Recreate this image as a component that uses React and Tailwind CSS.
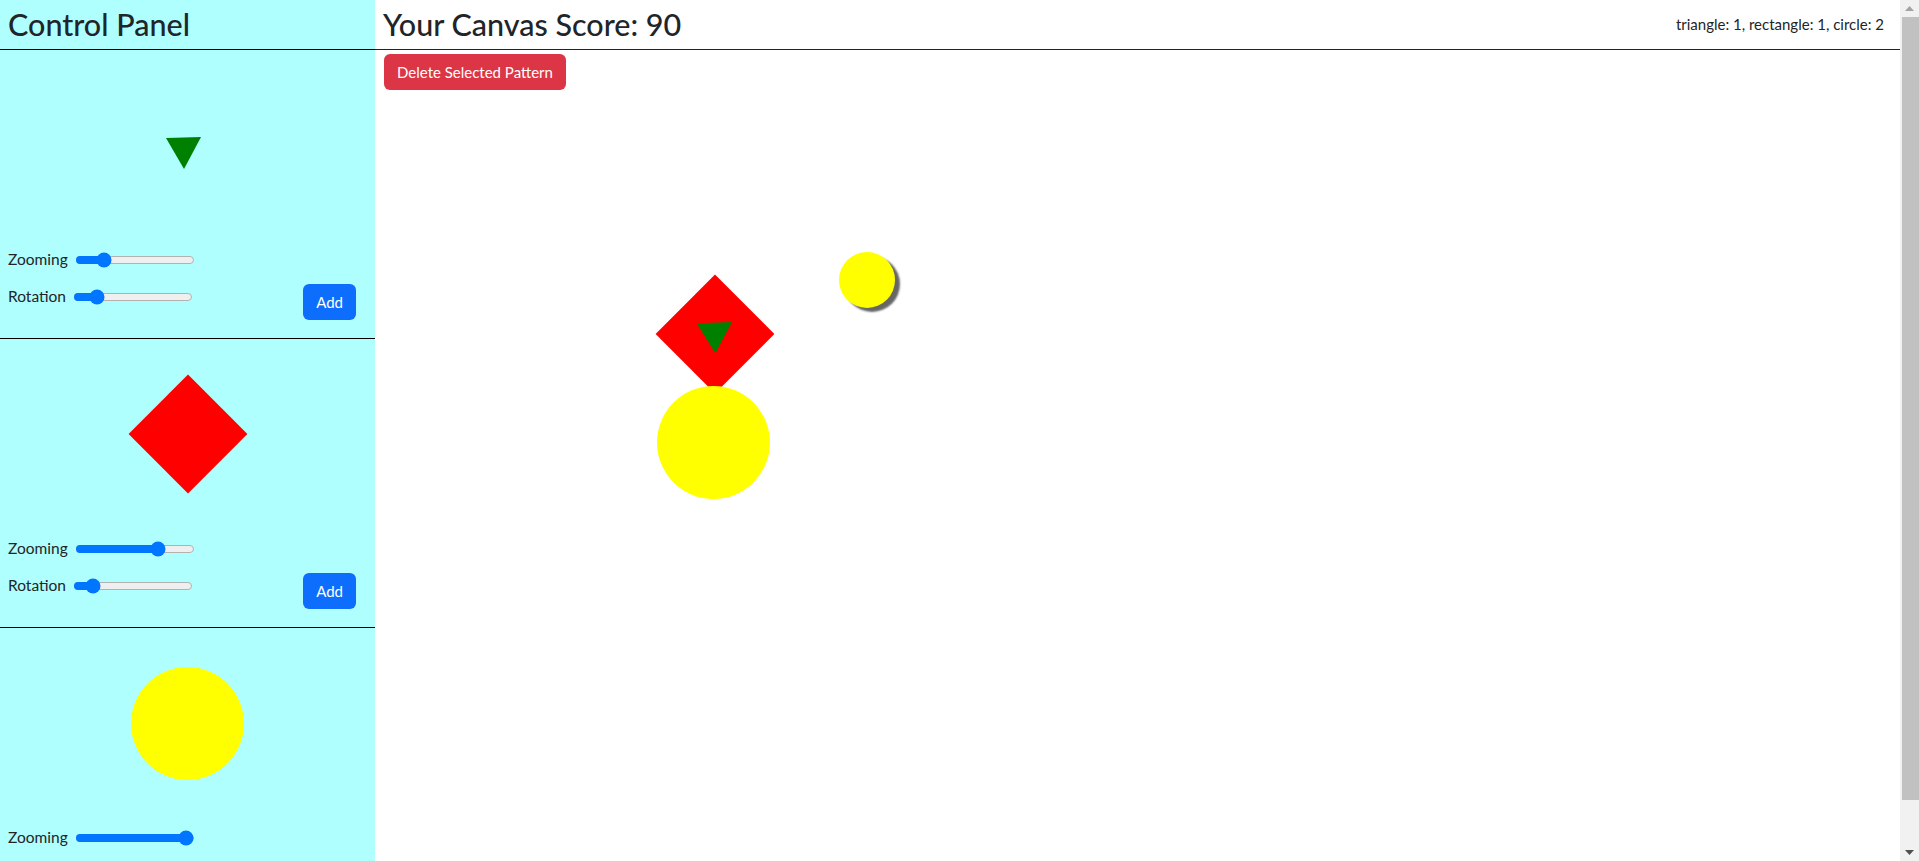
import React from 'react';

const font = { fontFamily: 'Lato, "Noto Sans", sans-serif' };

// native-looking range slider, value 0..1
const Slider = ({ value }) => {
  const pos = 7.5 + value * 103;
  return (
    <div className="relative h-[16px] w-[118px]">
      <div className="absolute left-0 right-0 top-1/2 h-[8px] -translate-y-1/2 rounded-full border border-[#b2b2b2] bg-[#efefef]" />
      <div className="absolute left-0 top-1/2 h-[8px] -translate-y-1/2 rounded-full bg-[#0075ff]" style={{ width: pos }} />
      <div className="absolute top-1/2 h-[15px] w-[15px] -translate-x-1/2 -translate-y-1/2 rounded-full bg-[#0075ff]" style={{ left: pos }} />
    </div>
  );
};

const Control = ({ label, value }) => (
  <div className="flex h-[22px] items-center gap-2 text-[15.5px] text-[#212529]">
    <span>{label}</span>
    <Slider value={value} />
  </div>
);

const Section = ({ children, zoom, rotation, addButton = true }) => (
  <section className="h-[289px] border-b border-black">
    <div className="relative h-[199px]">{children}</div>
    <div className="flex items-start justify-between pl-2 pr-[19px]">
      <div className="flex flex-col gap-[15px]">
        <Control label="Zooming" value={zoom} />
        {rotation !== undefined && <Control label="Rotation" value={rotation} />}
      </div>
      {addButton && (
        <button className="mt-[35px] flex h-[36px] items-center rounded-md bg-[#0d6efd] px-[13px] text-[15px] text-white">
          Add
        </button>
      )}
    </div>
  </section>
);

// window scrollbar as seen in the screenshot
const Scrollbar = () => (
  <div aria-hidden="true" className="fixed right-0 top-0 flex h-screen w-[19px] flex-col bg-[#f1f1f1]">
    <div className="flex h-[17px] items-center justify-center">
      <svg width="9" height="5" viewBox="0 0 9 5"><polygon points="0,5 9,5 4.5,0" fill="#a3a3a3" /></svg>
    </div>
    <div className="ml-[2px] h-[783px] bg-[#c1c1c1]" />
    <div className="flex-1" />
    <div className="flex h-[17px] items-center justify-center">
      <svg width="9" height="5" viewBox="0 0 9 5"><polygon points="0,0 9,0 4.5,5" fill="#505050" /></svg>
    </div>
  </div>
);

export default function App() {
  return (
    <div className="flex min-h-screen bg-white pr-[19px] text-[#212529]" style={font}>
      {/* Control panel */}
      <aside className="w-[375px] shrink-0 bg-[#afffff]">
        <div className="flex h-[50px] items-center border-b border-black px-2">
          <h2 className="text-[30.5px] font-medium leading-[1.2]">Control Panel</h2>
        </div>

        <Section zoom={0.2} rotation={0.15}>
          <svg className="absolute left-[165px] top-[86px]" width="38" height="35" viewBox="0 0 38 35">
            <polygon points="1,2 36,1 19,33" fill="#008000" />
          </svg>
        </Section>

        <Section zoom={0.73} rotation={0.11}>
          <div className="absolute left-[145.5px] top-[53px] h-[84px] w-[84px] rotate-45 bg-[#ff0000]" />
        </Section>

        <Section zoom={1} addButton={false}>
          <div className="absolute left-[131px] top-[39px] h-[113px] w-[113px] rounded-full bg-[#ffff00]" />
        </Section>
      </aside>

      {/* Canvas */}
      <main className="flex min-w-0 flex-1 flex-col">
        <div className="flex h-[50px] items-center justify-between border-b border-[#212529] pl-2 pr-4">
          <h2 className="text-[30.5px] font-medium leading-[1.2]">Your Canvas Score: 90</h2>
          <span className="text-[15px]">triangle: 1, rectangle: 1, circle: 2</span>
        </div>
        <div className="relative flex-1">
          <button className="ml-[9px] mt-[4px] flex h-[36px] items-center rounded-md bg-[#dc3545] px-[13px] text-[15px] text-white">
            Delete Selected Pattern
          </button>

          <div className="absolute left-[297.5px] top-[241.5px] h-[84px] w-[84px] rotate-45 bg-[#ff0000]" />
          <svg className="absolute left-[320px] top-[271px]" width="40" height="35" viewBox="0 0 40 35">
            <polygon points="1.7,2.3 37,1 20.3,32.3" fill="#008000" />
          </svg>
          <div className="absolute left-[282px] top-[335.5px] h-[113px] w-[113px] rounded-full bg-[#ffff00]" />
          <div className="absolute left-[464px] top-[202px] h-[56px] w-[56px] rounded-full bg-[#ffff00] shadow-[5px_4px_2px_#666]" />
        </div>
      </main>

      <Scrollbar />
    </div>
  );
}
